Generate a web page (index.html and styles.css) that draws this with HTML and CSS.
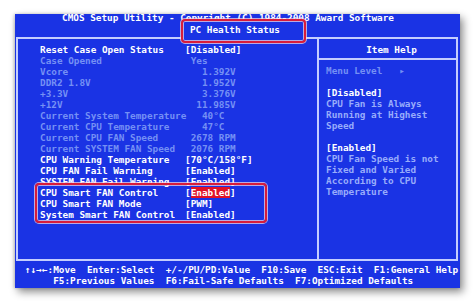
FILE: index.html
```html
<!DOCTYPE html>
<html lang="en">
<head>
  <meta charset="UTF-8">
  <title>CMOS Setup Utility - PC Health Status</title>
  <link rel="stylesheet" href="styles.css">
</head>
<body>
  <div class="screen">
    <!-- Header -->
    <div class="header">
      <div class="title">CMOS Setup Utility - Copyright (C) 1984-2008 Award Software</div>
      <div class="subtitle">PC Health Status</div>
    </div>
    <div class="mark mark-title"></div>

    <!-- Main panel -->
    <div class="panel">
      <div class="items">
        <div class="row"><span>Reset Case Open Status</span><span>[Disabled]</span></div>
        <div class="row dim"><span>Case Opened</span><span> Yes</span></div>
        <div class="row dim"><span>Vcore</span><span>   1.392V</span></div>
        <div class="row dim"><span>DDR2 1.8V</span><span>   1.952V</span></div>
        <div class="row dim"><span>+3.3V</span><span>   3.376V</span></div>
        <div class="row dim"><span>+12V</span><span>  11.985V</span></div>
        <div class="row dim"><span>Current System Temperature</span><span>   40°C</span></div>
        <div class="row dim"><span>Current CPU Temperature</span><span>   47°C</span></div>
        <div class="row dim"><span>Current CPU FAN Speed</span><span> 2678 RPM</span></div>
        <div class="row dim"><span>Current SYSTEM FAN Speed</span><span> 2076 RPM</span></div>
        <div class="row"><span>CPU Warning Temperature</span><span>[70°C/158°F]</span></div>
        <div class="row"><span>CPU FAN Fail Warning</span><span>[Enabled]</span></div>
        <div class="row"><span>SYSTEM FAN Fail Warning</span><span>[Enabled]</span></div>
        <div class="row"><span>CPU Smart FAN Control</span><span>[<span class="sel">Enabled</span>]</span></div>
        <div class="row"><span>CPU Smart FAN Mode</span><span>[PWM]</span></div>
        <div class="row"><span>System Smart FAN Control</span><span>[Enabled]</span></div>
      </div>
      <div class="help">
        <div class="help-head">Item Help</div>
        <div class="help-body">
          <div class="level">Menu Level   &#9656;</div>
          <div class="gap"></div>
          <div class="opt">[Disabled]</div>
          <div>CPU Fan is Always</div>
          <div>Running at Highest</div>
          <div>Speed</div>
          <div class="gap"></div>
          <div class="opt">[Enabled]</div>
          <div>CPU Fan Speed is not</div>
          <div>Fixed and Varied</div>
          <div>According to CPU</div>
          <div>Temperature</div>
        </div>
      </div>
    </div>
    <div class="mark mark-fans"></div>

    <!-- Footer keys -->
    <div class="footer">
      <div>↑↓→←:Move  Enter:Select  +/-/PU/PD:Value  F10:Save  ESC:Exit  F1:General Help</div>
      <div>     F5:Previous Values  F6:Fail-Safe Defaults  F7:Optimized Defaults</div>
    </div>
  </div>
</body>
</html>
```

FILE: styles.css
```css
body {
  margin: 0;
  width: 474px;
  height: 301px;
  background: #ffffff;
  overflow: hidden;
  font-family: "DejaVu Sans Mono", "Liberation Mono", monospace;
  font-weight: bold;
  font-size: 9.35px;
  line-height: 11px;
}

/* Blue BIOS screen */
.screen {
  position: relative;
  margin: 14px 0 0 15px;
  width: 445px;
  height: 274px;
  background: #1a33e4;
  color: #ffffff;
  box-shadow: 3px 4px 8px rgba(0, 0, 0, 0.45), -1px 0 3px rgba(0, 0, 0, 0.2);
  display: flex;
  flex-direction: column;
}

.title,
.subtitle,
.row span,
.help-body div,
.footer div {
  white-space: pre;
}

.header {
  height: 23px;
  text-align: center;
}

.title {
  margin-top: -2px;
  margin-left: -19px;
}

.subtitle {
  position: relative;
  z-index: 2;
  margin-top: 1px;
  margin-left: -5px;
}

/* Main panel */
.panel {
  height: 220px;
  margin: 0 2px 0 1px;
  border: 2px solid #c4cefe;
  display: flex;
}

.items {
  width: 301px;
  padding: 5px 0 0 22px;
  border-right: 2px solid #c4cefe;
  box-sizing: border-box;
}

.row {
  display: grid;
  grid-template-columns: 145px auto;
  height: 11px;
}

.dim {
  color: #7590f4;
}

.sel {
  background: #e01228;
  color: #ffffff;
}

.help {
  flex: 1;
  display: flex;
  flex-direction: column;
}

.help-head {
  height: 21px;
  padding: 5px 0 0 8px;
  box-sizing: border-box;
  text-align: center;
  border-bottom: 2px solid #c4cefe;
}

.help-body {
  padding: 5px 0 0 7px;
  color: #98acfb;
}

.help-body .level {
  color: #7590f4;
}

.help-body .opt {
  color: #ffffff;
}

.gap {
  height: 11px;
}

/* Footer */
.footer {
  padding: 3px 0 0 10px;
}

/* Red annotation frames */
.mark {
  position: absolute;
  border: 2px solid #d81c3a;
  border-radius: 4px;
  box-shadow: 0 0 0 1px rgba(255, 220, 225, 0.7), inset 0 0 0 1px rgba(255, 220, 225, 0.7);
}

.mark-title {
  left: 166px;
  top: 5px;
  width: 121px;
  height: 20px;
  background: #1a33e4;
  z-index: 1;
}

.mark-fans {
  left: 20px;
  top: 169px;
  width: 228px;
  height: 36px;
}
```
